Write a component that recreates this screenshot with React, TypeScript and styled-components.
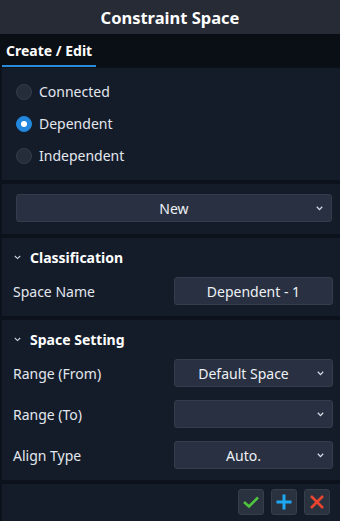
import React, { useState } from 'react';
import styled, { createGlobalStyle } from 'styled-components';

const GlobalStyle = createGlobalStyle`
  html, body { margin: 0; padding: 0; background: #0c111a; }
  * { box-sizing: border-box; }
  body { font-family: "Noto Sans", "Open Sans", sans-serif; }
`;

const Window = styled.div`
  width: 340px;
  height: 521px;
  background: #0b1018;
  display: flex;
  flex-direction: column;
  overflow: hidden;
  color: #e3e7ee;
`;

const TitleBar = styled.div`
  height: 35px;
  flex: none;
  background: #262b36;
  border-bottom: 1px solid #090c12;
  display: flex;
  align-items: center;
  justify-content: center;
  font-size: 16.5px;
  font-weight: 700;
  color: #ffffff;
`;

const TabBar = styled.div`
  height: 32px;
  flex: none;
  background: #0a0e15;
  display: flex;
  align-items: flex-end;
  padding-left: 2px;
`;

const Tab = styled.div<{ $active?: boolean }>`
  height: 31px;
  padding: 0 4px;
  display: flex;
  align-items: center;
  font-size: 14px;
  font-weight: 700;
  color: #ffffff;
  border-bottom: 2px solid ${p => (p.$active ? '#2a8ad8' : 'transparent')};
`;

const Body = styled.div`
  flex: 1;
  display: flex;
  flex-direction: column;
  gap: 4px;
  padding-top: 1px;
  padding-left: 2px;
  background: #0c121b;
`;

const Panel = styled.div<{ $pad?: string }>`
  background: #141c2a;
  padding: ${p => p.$pad || '6px 7px 11px 11px'};
  display: flex;
  flex-direction: column;
`;

const RadioRow = styled.label`
  height: 32px;
  display: flex;
  align-items: center;
  gap: 7px;
  font-size: 14px;
  color: #e3e7ee;
  cursor: pointer;
  padding-bottom: 1px;
`;

const RadioDot = styled.span<{ $checked?: boolean }>`
  width: 16px;
  height: 16px;
  border-radius: 50%;
  display: flex;
  align-items: center;
  justify-content: center;
  background: ${p => (p.$checked ? '#2288dd' : '#262d3a')};
  border: 1px solid ${p => (p.$checked ? '#2288dd' : '#343c4a')};
  &::after {
    content: '';
    width: 6px;
    height: 6px;
    border-radius: 50%;
    background: #ffffff;
    display: ${p => (p.$checked ? 'block' : 'none')};
  }
`;

const SelectBox = styled.div<{ $width?: string }>`
  position: relative;
  width: ${p => p.$width || '100%'};
  height: 28px;
  background: #283041;
  border: 1px solid #353d4d;
  border-radius: 3px;
  display: flex;
  align-items: center;
  justify-content: center;
  font-size: 14px;
  color: #eef1f5;
  padding-right: ${p => (p.$width ? '20px' : '0')};
`;

const Caret = styled.svg`
  position: absolute;
  right: 8px;
  top: 50%;
  margin-top: -2px;
`;

const SectionHeader = styled.div`
  height: 27px;
  display: flex;
  align-items: center;
  gap: 9px;
  font-size: 14px;
  font-weight: 700;
  color: #ffffff;
  margin-bottom: 6px;
  padding-left: 1px;
`;

const Rows = styled.div`
  display: flex;
  flex-direction: column;
  gap: 13px;
`;

const FieldRow = styled.div`
  display: grid;
  grid-template-columns: 1fr 159px;
  align-items: center;
  font-size: 14px;
  color: #e3e7ee;
`;

const TextBox = styled.div`
  height: 28px;
  background: #283041;
  border: 1px solid #353d4d;
  border-radius: 3px;
  display: flex;
  align-items: center;
  justify-content: center;
  font-size: 14px;
  color: #eef1f5;
`;

const Footer = styled.div`
  flex: 1;
  background: #141c2a;
  display: flex;
  justify-content: flex-end;
  align-items: flex-start;
  gap: 7px;
  padding: 5px 10px 0 0;
`;

const IconButton = styled.button`
  width: 26px;
  height: 26px;
  padding: 0;
  background: #2a3240;
  border: 1px solid #363e4c;
  border-radius: 3px;
  display: flex;
  align-items: center;
  justify-content: center;
  cursor: pointer;
`;

const Chevron = () => (
  <Caret width="7" height="5" viewBox="0 0 7 5">
    <path d="M0.8 0.8 L3.5 3.6 L6.2 0.8" fill="none" stroke="#d8dde6" strokeWidth="1.3" />
  </Caret>
);

const HeaderChevron = () => (
  <svg width="7" height="5" viewBox="0 0 7 5">
    <path d="M0.8 1 L3.5 3.6 L6.2 1" fill="none" stroke="#cfd5de" strokeWidth="1.1" />
  </svg>
);

const Select: React.FC<{ value: string; width?: string }> = ({ value, width }) => (
  <SelectBox $width={width}>
    {value}
    <Chevron />
  </SelectBox>
);

const modes = ['Connected', 'Dependent', 'Independent'];

export default function App() {
  const [mode, setMode] = useState('Dependent');

  return (
    <>
      <GlobalStyle />
      <Window>
        <TitleBar>Constraint Space</TitleBar>
        <TabBar>
          <Tab $active>Create / Edit</Tab>
        </TabBar>
        <Body>
          <Panel $pad="8px 8px 8px 14px">
            {modes.map(m => (
              <RadioRow key={m} onClick={() => setMode(m)}>
                <RadioDot $checked={m === mode} />
                {m}
              </RadioRow>
            ))}
          </Panel>

          <Panel $pad="10px 8px 12px 14px">
            <Select value="New" />
          </Panel>

          <Panel>
            <SectionHeader>
              <HeaderChevron />
              Classification
            </SectionHeader>
            <Rows>
              <FieldRow>
                <span>Space Name</span>
                <TextBox>Dependent - 1</TextBox>
              </FieldRow>
            </Rows>
          </Panel>

          <Panel>
            <SectionHeader>
              <HeaderChevron />
              Space Setting
            </SectionHeader>
            <Rows>
              <FieldRow>
                <span>Range (From)</span>
                <Select value="Default Space" width="159px" />
              </FieldRow>
              <FieldRow>
                <span>Range (To)</span>
                <Select value="" width="159px" />
              </FieldRow>
              <FieldRow>
                <span>Align Type</span>
                <Select value="Auto." width="159px" />
              </FieldRow>
            </Rows>
          </Panel>

          <Footer>
            <IconButton title="Apply">
              <svg width="18" height="14" viewBox="0 0 18 14">
                <path d="M2 7 L7 11.5 L16 2.5" fill="none" stroke="#4fc43d" strokeWidth="2.6" />
              </svg>
            </IconButton>
            <IconButton title="Add">
              <svg width="18" height="18" viewBox="0 0 18 18">
                <path d="M9 1.5 V16.5 M1.5 9 H16.5" fill="none" stroke="#1ea8f2" strokeWidth="3" />
              </svg>
            </IconButton>
            <IconButton title="Cancel">
              <svg width="16" height="16" viewBox="0 0 16 16">
                <path d="M2 2 L14 14 M14 2 L2 14" fill="none" stroke="#ec452f" strokeWidth="2.6" />
              </svg>
            </IconButton>
          </Footer>
        </Body>
      </Window>
    </>
  );
}
